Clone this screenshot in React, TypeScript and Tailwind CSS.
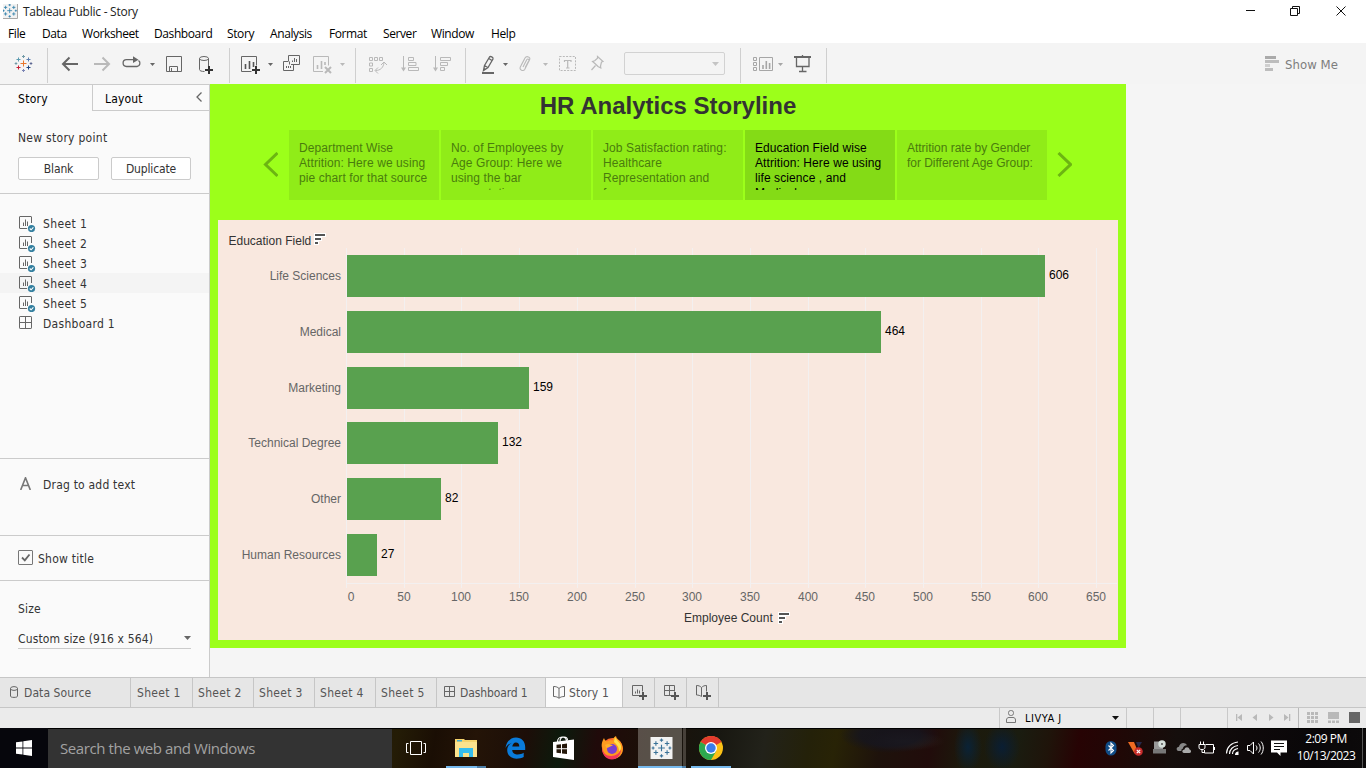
import type { ReactNode } from "react";

const TAHOMA = "font-['DejaVu_Sans_Condensed','DejaVu_Sans',sans-serif] font-stretch-condensed text-[12px] tracking-[0.17px]";
const SEGOE = "font-['Open_Sans','Noto_Sans',sans-serif]";
const ARIAL = "font-['Liberation_Sans',Arial,sans-serif]";

const DARK = "#666666";
const LIGHT = "#b9b9b9";

/* An icon whose drawing uses toolbar coordinates: x..x+w across, 51..79 down. */
function Tool({ x, w, className = "", children }: { x: number; w: number; className?: string; children: ReactNode }) {
  return (
    <svg width={w} height={28} viewBox={`${x} 51 ${w} 28`} className={`shrink-0 ${className}`} fill="none" stroke={DARK} strokeWidth={1}>
      {children}
    </svg>
  );
}

function Sep({ className = "" }: { className?: string }) {
  return <div className={`h-[35px] w-px shrink-0 bg-[#cfcfcf] ${className}`} />;
}

function Caret({ x, color = DARK, className = "" }: { x: number; color?: string; className?: string }) {
  return (
    <Tool x={x} w={6} className={className}>
      <path d={`M${x} 63h5l-2.5 3z`} fill={color} stroke="none" />
    </Tool>
  );
}

function Plus({ x, y, color = "#333" }: { x: number; y: number; color?: string }) {
  return <path d={`M${x - 4} ${y}h8M${x} ${y - 4}v8`} stroke={color} strokeWidth={2} />;
}

function Cross({ cx, cy, s, color, sw = 1 }: { cx: number; cy: number; s: number; color: string; sw?: number }) {
  return <path d={`M${cx - s} ${cy}h${2 * s}M${cx} ${cy - s}v${2 * s}`} stroke={color} strokeWidth={sw} fill="none" />;
}

function TableauMark({ cx, cy, mono }: { cx: number; cy: number; mono?: string }) {
  const c = (v: string) => mono ?? v;
  return (
    <g>
      <Cross cx={cx} cy={cy} s={3} color={c("#e8762c")} />
      <Cross cx={cx - 5} cy={cy - 4} s={2} color={c("#5b9bb0")} />
      <Cross cx={cx + 5} cy={cy - 4} s={2} color={c("#5b7fb0")} />
      <Cross cx={cx - 5} cy={cy + 4} s={2} color={c("#c72035")} />
      <Cross cx={cx + 5} cy={cy + 4} s={2} color={c("#1f447e")} />
      <Cross cx={cx} cy={cy - 7} s={1.5} color={c("#7199a6")} />
      <Cross cx={cx} cy={cy + 7} s={1.5} color={c("#7b85b5")} />
      <Cross cx={cx - 7.5} cy={cy} s={1.3} color={c("#7199a6")} />
      <Cross cx={cx + 7.5} cy={cy} s={1.3} color={c("#5c6692")} />
    </g>
  );
}

function TitleBar() {
  return (
    <div className="flex h-[23px] shrink-0 items-center bg-white">
      <svg width="16" height="16" viewBox="0 0 16 16" className="ml-[3px] mt-px shrink-0">
        <path d="M0 0h14v14H0z" fill="#f2f2f2" />
        <path d="M0 14.5h14.5V0" fill="none" stroke="#a8a8a8" />
        <g transform="translate(-.3 -.3) scale(.82)">
          <TableauMark cx={8.500} cy={8.500} mono="#2f7fab" />
        </g>
      </svg>
      <span className={`${SEGOE} ml-1 mt-px text-[12px] leading-[16px] tracking-[-0.25px] text-[#222]`}>Tableau Public - Story</span>
      <svg width="100" height="16" viewBox="1246 2 100 16" className="ml-auto mr-5 -mt-[2px]" fill="none" stroke="#111" strokeWidth="1">
        <path d="M1246 9.500h9M1290.500 7.500h7v7h-7zM1292.500 7.500v-2h7v7h-2M1336.500 5.500l9 9M1345.500 5.500l-9 9" />
      </svg>
    </div>
  );
}

const MENU: [string, string][] = [
  ["File", "w-[34px]"], ["Data", "w-[40px]"], ["Worksheet", "w-[72px]"], ["Dashboard", "w-[73px]"], ["Story", "w-[43px]"],
  ["Analysis", "w-[59px]"], ["Format", "w-[54px]"], ["Server", "w-[48px]"], ["Window", "w-[60px]"], ["Help", "w-[40px]"],
];

function MenuBar() {
  return (
    <div className={`${SEGOE} flex h-[20px] shrink-0 items-center bg-white pl-2 text-[12px] leading-[16px] tracking-[-0.4px] text-black`}>
      {MENU.map(([t, w]) => (
        <span key={t} className={`${w} shrink-0 pt-px`}>{t}</span>
      ))}
    </div>
  );
}

function Toolbar() {
  return (
    <div className="flex h-[41px] shrink-0 items-center bg-[#f4f4f4] pb-px pt-1">
      <Tool x={14} w={20} className="ml-[14px]"><TableauMark cx={23.500} cy={63.500} /></Tool>
      <Sep className="ml-[13px]" />
      <Tool x={61} w={18} className="ml-[13px]"><path d="M63 64h15M69.500 57.500L63 64l6.500 6.500" strokeWidth="2" /></Tool>
      <Tool x={93} w={18} className="ml-[14px]"><path d="M94 64h15M102.500 57.500L109 64l-6.500 6.500" stroke={LIGHT} strokeWidth="2" /></Tool>
      <Tool x={122} w={20} className="ml-[11px]">
        <path d="M134 59.700h-7.500a3.300 3.300 0 0 0 0 6.800h10.500a3.300 3.300 0 0 0 1.500-6" strokeWidth="1.300" />
        <path d="M133 56.300l5.500 3.400-5.500 3.400z" fill={DARK} stroke="none" />
      </Tool>
      <Caret x={150} className="ml-[8px]" />
      <Tool x={165} w={18} className="ml-[9px]"><path d="M166.500 56.500h15v15h-15zM169.500 71v-4.500h8V71M171.500 68v3" /></Tool>
      <Tool x={198} w={18} className="ml-[15px]">
        <ellipse cx="204" cy="58.500" rx="4.500" ry="2" />
        <path d="M199.500 58.500v11c0 1.300 2 2 5 2M208.500 58.500v8" />
        <Plus x={209} y={70} />
      </Tool>
      <Sep className="ml-[13px]" />
      <Tool x={240} w={22} className="ml-[10px]">
        <path d="M251.500 71.500h-10v-15h15v9" />
        <path d="M245.500 69v-5M249.500 69v-8M253.500 67v-5" stroke="#555" strokeWidth="1.600" />
        <Plus x={256} y={70} />
      </Tool>
      <Caret x={268} className="ml-[6px]" />
      <Tool x={282} w={20} className="ml-[8px]">
        <path d="M288.500 61v-5.500h11v9h-8.500M289.500 61.500v3M283.500 61.500h5M283.500 61.500v9h10v-5.500" />
        <path d="M292.500 62v-1.500M294.500 62v-4M296.500 62v-3M286.500 68v-2M288.500 68v-2M290.500 68v-2" />
      </Tool>
      <Tool x={313} w={20} className="ml-[11px]">
        <g stroke={LIGHT}>
          <path d="M323 71.500h-9.500v-15h15v9" />
          <path d="M317.500 69v-4M321.500 69v-8M325 65v-3" strokeWidth="1.600" />
          <path d="M325 67l6 6M331 67l-6 6" strokeWidth="2" />
        </g>
      </Tool>
      <Caret x={340} color={LIGHT} className="ml-[7px]" />
      <Sep className="ml-[9px]" />
      <Tool x={368} w={20} className="ml-[12px]">
        <path d="M369.500 57.500h3v3h-3zM374.500 57.500h3v3h-3zM379.500 57.500h3v3h-3zM369.500 63h3v3h-3zM369.500 68.500h3v3h-3zM375.500 70.500c5 0 8-3 8.500-8M378 67.500l-3 3 3 3M381 65l3-3 3 3" stroke={LIGHT} />
      </Tool>
      <Tool x={400} w={20} className="ml-[12px]">
        <path d="M403.500 56v14M408.500 57.500h5v3h-5zM408.500 62.500h7.500v3h-7.500zM408.500 67.500h10v3h-10z" stroke={LIGHT} />
        <path d="M401 67.500h5l-2.500 4z" fill={LIGHT} stroke="none" />
      </Tool>
      <Tool x={432} w={20} className="ml-[12px]">
        <path d="M435.500 56v14M440.500 57.500h10v3h-10zM440.500 62.500h7v3h-7zM440.500 67.500h4v3h-4z" stroke={LIGHT} />
        <path d="M433 67.500h5l-2.500 4z" fill={LIGHT} stroke="none" />
      </Tool>
      <Sep className="ml-[13px]" />
      <Tool x={481} w={16} className="ml-[15px]">
        <path d="M482 73h12" strokeWidth="2" />
        <path d="M483.500 70.500l1-5 5-8.500c1-1.300 4 .3 3.500 2l-5 8.500zM484.500 65.500l3.500 2.200M488.800 58.500l3.500 2.200M483.500 70.500l1.500-2" strokeWidth="1.300" />
      </Tool>
      <Caret x={503} className="ml-[6px]" />
      <Tool x={518} w={16} className="ml-[9px]">
        <path d="M521 65.500l4-7.500c1.500-2.500 6-1 4.600 1.800l-4.800 9.500c-1.500 2.500-5.800.5-4.500-2.200l4-7.600M523 67l3.700-7.200c1-1.500 2.800-.5 2.200.8l-3.700 7" stroke={LIGHT} strokeWidth="1.100" />
      </Tool>
      <Caret x={543} color={LIGHT} className="ml-[9px]" />
      <Tool x={558} w={20} className="ml-[9px]">
        <rect x="559.500" y="56.500" width="16" height="14" stroke={LIGHT} strokeDasharray="2 1.300" />
        <path d="M564.500 62v-1.500h6.500V62M567.700 60.500v7.500M566 68h3.500" stroke={LIGHT} strokeWidth="1.200" />
      </Tool>
      <Tool x={590} w={16} className="ml-[12px]">
        <path d="M597.500 56.500l5.500 5-1.500.5-1 4 .3 2-2.800-1.500-2.500-2.500-3-2.500 2.200-.8 2.800-2.500zM595.500 65.500l-4 4.500" stroke={LIGHT} strokeWidth="1.200" />
      </Tool>
      <div className="mb-[3px] ml-[18px] flex h-[23px] w-[101px] shrink-0 items-center justify-end rounded-[2px] border border-[#d2d2d2] pr-[5px]">
        <svg width="7" height="4" viewBox="0 0 7 4"><path d="M0 0h7L3.500 4z" fill="#c4c4c4" /></svg>
      </div>
      <Sep className="ml-[15px]" />
      <Tool x={752} w={22} className="ml-[11px]">
        <path d="M753.500 57.500h3v3h-3zM753.500 62.500h3v3h-3zM753.500 67.500h3v3h-3zM759.500 57.500h13v13h-13z" stroke="#a6a6a6" />
        <path d="M763 69v-4M766.300 69v-8M769.600 69v-6" stroke="#a6a6a6" strokeWidth="1.600" />
      </Tool>
      <Caret x={778} color="#a6a6a6" className="ml-[4px]" />
      <Tool x={793} w={20} className="ml-[9px]">
        <path d="M794 57h17" strokeWidth="2" />
        <path d="M802.500 55v2M796.500 57v9.500h12.500V57M802.500 66.500v5M799 71.500h7.500" strokeWidth="1.300" />
      </Tool>
      <Sep className="ml-[13px]" />
      <svg width="15" height="16" viewBox="0 0 15 16" className="mb-[2px] ml-auto shrink-0">
        <path d="M0 0h11v3H0z" fill="#aaa" />
        <path d="M0 4h14v3H0z" fill="#bdbdbd" />
        <path d="M0 8h5v3H0z" fill="#cfcfcf" />
        <path d="M0 12h8v3H0z" fill="#bdbdbd" />
      </svg>
      <span className="mb-[2px] mr-[28px] ml-[5px] pt-px font-['DejaVu_Sans_Condensed','DejaVu_Sans',sans-serif] font-stretch-condensed text-[13px] leading-[16px] tracking-[0.05px] text-[#7d7d7d]">Show Me</span>
    </div>
  );
}

function GridIcon({ color = DARK, className = "" }: { color?: string; className?: string }) {
  return (
    <svg width="13" height="13" viewBox="0 0 13 13" className={`shrink-0 ${className}`} fill="none" stroke={color}>
      <rect x=".5" y=".5" width="12" height="12" rx=".6" />
      <path d="M6.500 .5v12M.5 6.500h12" />
    </svg>
  );
}

function SheetIcon() {
  return (
    <svg width="17" height="16" viewBox="0 0 17 16" className="shrink-0" fill="none" stroke={DARK}>
      <path d="M8 12.500H1a.5.5 0 0 1-.5-.5V1a.5.5 0 0 1 .5-.5h11a.5.5 0 0 1 .5.5v6M4.500 10V6.500M6.500 10V3.500M8.500 10V5.500" />
      <circle cx="12.500" cy="12.500" r="3.600" fill="#337f9f" stroke="none" />
      <path d="M10.700 12.500l1.400 1.300 2.300-2.500" stroke="#fff" strokeWidth="1.100" />
    </svg>
  );
}

function Sidebar() {
  return (
    <aside className={`${TAHOMA} flex w-[210px] shrink-0 flex-col border-r border-t border-[#cbcbcb] bg-[#fafafa] leading-[16px] text-[#333]`}>
      <div className="flex h-[26px] shrink-0 text-black">
        <div className="w-[92px] pl-[18px] pt-[6px] tracking-[0.3px]">Story</div>
        <div className="flex flex-1 justify-between border-b border-l border-[#cbcbcb] pl-3 pr-[7px] pt-[6px]">
          <span>Layout</span>
          <svg width="6" height="10" viewBox="0 0 6 10" className="mt-px" fill="none" stroke="#666" strokeWidth="1.300"><path d="M5.500 .5L1 5l4.500 4.500" /></svg>
        </div>
      </div>
      <div className="h-[83px] shrink-0 border-b border-[#cbcbcb] pl-[18px] pt-[19px]">
        <div className="tracking-[0.28px]">New story point</div>
        <div className="mt-[11px] flex gap-3">
          <div className="h-[23px] w-[81px] rounded-[2px] border border-[#cbcbcb] bg-white pt-[3px] text-center tracking-[-0.15px]">Blank</div>
          <div className="h-[23px] w-[80px] rounded-[2px] border border-[#cbcbcb] bg-white pt-[3px] text-center tracking-[-0.15px]">Duplicate</div>
        </div>
      </div>
      <div className="h-[265px] shrink-0 border-b border-[#cbcbcb] pt-[19px]">
        {["Sheet 1", "Sheet 2", "Sheet 3", "Sheet 4", "Sheet 5"].map((t) => (
          <div key={t} className={`flex h-5 items-center gap-[7px] pl-[19px] pt-[2px] ${t === "Sheet 4" ? "bg-[#f4f4f4]" : ""}`}>
            <SheetIcon />
            <span className="tracking-[0.4px]">{t}</span>
          </div>
        ))}
        <div className="flex h-5 items-center gap-[11px] pl-[19px] pt-[2px]">
          <GridIcon className="-mt-[3px]" />
          <span className="tracking-[0.28px]">Dashboard 1</span>
        </div>
      </div>
      <div className="flex h-[77px] shrink-0 border-b border-[#cbcbcb] pl-5 pt-[18px]">
        <svg width="11" height="13" viewBox="0 0 11 13" fill="none" stroke="#777" strokeWidth="1.600"><path d="M.7 13L5.500 .8 10.300 13M2.500 8.500h6" /></svg>
        <span className="ml-3 tracking-[0.2px]">Drag to add text</span>
      </div>
      <div className="flex h-[45px] shrink-0 border-b border-[#cbcbcb] pl-[18px] pt-[14px]">
        <div className="h-[15px] w-[15px] rounded-[1px] border border-[#777]">
          <svg width="13" height="13" viewBox="0 0 13 13" fill="none" stroke="#666" strokeWidth="1.800"><path d="M3 6.500l2.800 2.800L10.500 3.500" /></svg>
        </div>
        <span className="ml-[5px] mt-px tracking-[0.25px]">Show title</span>
      </div>
      <div className="pl-[18px] pr-[18px] pt-5">
        <div>Size</div>
        <div className="mt-[12px] flex h-[20px] items-center justify-between border-b border-[#cbcbcb]">
          <span className="tracking-[0.13px]">Custom size (916 x 564)</span>
          <svg width="7" height="4" viewBox="0 0 7 4" className="-mt-[2px]"><path d="M0 0h7L3.500 4z" fill={DARK} /></svg>
        </div>
      </div>
    </aside>
  );
}

const POINTS: string[][] = [
  ["Department Wise", "Attrition: Here we using", "pie chart for that source"],
  ["No. of Employees by", "Age Group: Here we", "using the bar", "presentation"],
  ["Job Satisfaction rating:", "Healthcare", "Representation and", "for"],
  ["Education Field wise", "Attrition: Here we using", "life science , and", "Medical ,"],
  ["Attrition rate by Gender", "for Different Age Group:"],
];

const BARS: [string, number, number, number][] = [
  ["Life Sciences", 606, 255, 698],
  ["Medical", 464, 311, 534],
  ["Marketing", 159, 367, 182],
  ["Technical Degree", 132, 422, 151],
  ["Other", 82, 478, 94],
  ["Human Resources", 27, 534, 30],
];
const TICKS = [346.5, 404.5, 461.5, 519.5, 577.5, 635.5, 692.5, 750.5, 808.5, 865.5, 923.5, 981.5, 1038.5, 1096.5];

function SortMark({ x, y }: { x: number; y: number }) {
  return (
    <g>
      <path d={`M${x - 1} ${y - 1}h12v4h-4v4h-3v4h-5z`} fill="#fff" />
      <path d={`M${x} ${y}h10v2h-10zM${x} ${y + 4}h6v2h-6zM${x} ${y + 8}h3v2h-3z`} fill="#555" />
    </g>
  );
}

function Chart() {
  return (
    <svg width="900" height="420" viewBox="218 220 900 420" className={`${ARIAL} block bg-[#f9e8df] text-[12px]`}>
      {TICKS.map((x) => <path key={x} d={`M${x} 248V588`} stroke="#f3f0f0" />)}
      <path d="M346 583.500h771" stroke="#f3f0f0" />
      {BARS.map(([name, n, y, w]) => (
        <g key={name}>
          <rect x={347} y={y} width={w} height={42} fill="#59a14f" />
          <text x={341} y={y + 25} textAnchor="end" fill="#666">{name}</text>
          <text x={347 + w + 4} y={y + 24} fill="#000">{n}</text>
        </g>
      ))}
      {TICKS.map((x, i) => (
        <text key={x} x={i === 0 ? 351 : x - 0.5} y={601} textAnchor="middle" fill="#666">{i * 50}</text>
      ))}
      <text x={228.500} y={245} fill="#333">Education Field</text>
      <SortMark x={315} y={234} />
      <text x={684} y={622} fill="#333">Employee Count</text>
      <SortMark x={779} y={613} />
    </svg>
  );
}

function Story() {
  return (
    <section className={`${ARIAL} flex h-[564px] w-[916px] shrink-0 flex-col bg-[#9cff1a] px-2`}>
      <h1 className="h-[46px] pt-2 text-center text-[24px] font-bold leading-[28px] text-[#333]">HR Analytics Storyline</h1>
      <div className="flex h-[90px]">
        <svg width="15" height="26" viewBox="0 0 15 26" className="ml-[45px] mt-[22px]" fill="none" stroke="#6cb512" strokeWidth="3"><path d="M14.500 1L2.500 12.500l12 11.500" /></svg>
        <div className="ml-[11px] flex gap-[2px]">
          {POINTS.map((lines, i) => (
            <div key={i} className={`h-[70px] w-[150px] px-[10px] pt-[11px] ${i === 3 ? "bg-[#84db16] text-black" : "bg-[#90ec18] text-[#4a7c0d]"}`}>
              <div className={`h-[49px] overflow-hidden whitespace-nowrap text-[12px] leading-[15px] ${i === 4 ? "tracking-[-0.03px]" : "tracking-[0.09px]"}`}>
                {lines.map((l) => <div key={l}>{l}</div>)}
              </div>
            </div>
          ))}
        </div>
        <svg width="15" height="26" viewBox="0 0 15 26" className="ml-[10px] mt-[22px]" fill="none" stroke="#6cb512" strokeWidth="3"><path d="M1.500 1l12 11.500L1.500 24" /></svg>
      </div>
      <Chart />
    </section>
  );
}

function Tab({ w, children, active }: { w: string; children: ReactNode; active?: boolean }) {
  return (
    <div className={`${w} flex shrink-0 items-center border-r border-[#c6c6c6] pl-[6px] ${active ? "bg-[#fafafa]" : ""}`}>{children}</div>
  );
}

function BookIcon() {
  return (
    <svg width="12" height="13" viewBox="0 0 12 13" className="shrink-0" fill="none" stroke={DARK}>
      <path d="M6 2.500C4.500 1 3 .5 .5 .5v10c2.500 0 4 .5 5.500 1.800 1.500-1.300 3-1.800 5.500-1.800V.5C9 .5 7.500 1 6 2.500zM6 2.500v9.500" />
    </svg>
  );
}

function SheetTabs() {
  return (
    <div className={`${TAHOMA} flex h-[31px] shrink-0 border-b border-t border-[#c6c6c6] bg-[#e6e6e6] leading-[16px] text-[#555]`}>
      <div className="flex w-[131px] shrink-0 items-center border-r border-[#c6c6c6] pl-[10px]">
        <svg width="8" height="12" viewBox="0 0 8 12" className="-mt-[2px] shrink-0" fill="none" stroke={DARK}><ellipse cx="4" cy="2.500" rx="3.500" ry="1.900" /><path d="M.5 2.500V10c0 .8 1 1.400 3.500 1.400S7.500 10.800 7.500 10V2.500" /></svg>
        <span className="ml-[6px] tracking-[0.08px]">Data Source</span>
      </div>
      <Tab w="w-[62px]"><span className="tracking-[0.3px]">Sheet 1</span></Tab>
      <Tab w="w-[61px]"><span className="-ml-px tracking-[0.3px]">Sheet 2</span></Tab>
      <Tab w="w-[61px]"><span className="-ml-px tracking-[0.3px]">Sheet 3</span></Tab>
      <Tab w="w-[61px]"><span className="-ml-px tracking-[0.3px]">Sheet 4</span></Tab>
      <Tab w="w-[61px]"><span className="-ml-px tracking-[0.3px]">Sheet 5</span></Tab>
      <Tab w="w-[109px]"><svg width="11" height="11" viewBox="0 0 11 11" className="-mt-[2px] ml-px" fill="none" stroke={DARK}><path d="M.5 .5h10v10H.5zM5.500 .5v10M.5 5.500h10" /></svg><span className="ml-[5px] tracking-[-0.12px]">Dashboard 1</span></Tab>
      <Tab w="w-[77px]" active><span className="ml-px flex"><BookIcon /></span><span className="ml-[4px]">Story 1</span></Tab>
      <Tab w="w-[32px]">
        <svg width="17" height="16" viewBox="0 0 17 16" className="ml-[2px] mt-px" fill="none" stroke={DARK}><path d="M8 10.500H1.500v-10h10v6M4.500 8.500v-2M6.500 8.500v-4M8.500 8.500v-3" /><Plus x={12} y={11} color="#555" /></svg>
      </Tab>
      <Tab w="w-[32px]">
        <svg width="17" height="16" viewBox="0 0 17 16" className="ml-[2px] mt-px" fill="none" stroke={DARK}><path d="M8 10.500H1.500v-10h10v6M6.500 .5v10M1.500 5.500h10" /><Plus x={12} y={11} color="#555" /></svg>
      </Tab>
      <Tab w="w-[32px]">
        <svg width="17" height="16" viewBox="0 0 17 16" className="ml-[2px] mt-px" fill="none" stroke={DARK}><path d="M6.500 2.500C5 1 3.500 .5 1.500 .5v9.500c2 0 3.500.5 5 1.500V2.500C8 1 9.500 .5 11.500 .5v6" /><Plus x={12} y={11} color="#555" /></svg>
      </Tab>
    </div>
  );
}

function StatusBar() {
  return (
    <div className="flex h-[20px] shrink-0 justify-end bg-[#ebebeb]">
      <div className="flex w-[128px] items-center border-l border-r border-[#c9c9c9] pl-[6px]">
        <svg width="10" height="13" viewBox="0 0 10 13" className="-mt-[3px]" fill="none" stroke="#777"><rect x="2.500" y=".5" width="5" height="5" rx="2.200" /><path d="M.5 12.500v-2.500c0-1.600 1-2.500 2.500-2.500h4c1.500 0 2.500.9 2.500 2.500v2.500z" /></svg>
        <span className="ml-[9px] pt-[2px] font-['DejaVu_Sans_Condensed','DejaVu_Sans',sans-serif] font-stretch-condensed text-[11px] leading-[14px] tracking-[0.5px] text-black">LIVYA J</span>
        <svg width="7" height="4" viewBox="0 0 7 4" className="ml-auto mr-[7px]"><path d="M0 0h7L3.500 4z" fill="#111" /></svg>
      </div>
      <div className="w-[27px] border-r border-[#c9c9c9]" />
      <div className="w-[27px] border-r border-[#c9c9c9]" />
      <div className="w-[47px] border-r border-[#c9c9c9]" />
      <svg width="71" height="20" viewBox="1228 708 71 20" className="shrink-0" fill="#b9b9b9">
        <path d="M1236 714h1.300v7h-1.300zM1242 714v7l-4.500-3.500zM1257 714v7l-4.500-3.500zM1269 714v7l4.500-3.500zM1284 714v7l4.500-3.500zM1289 714h1.300v7h-1.300zM1298 708h1v20h-1z" />
      </svg>
      <svg width="67" height="20" viewBox="1299 708 67 20" className="shrink-0" fill="#b9b9b9">
        <path d="M1307 712h3v3h-3zM1311 712h3v3h-3zM1315 712h3v3h-3zM1307 716h3v3h-3zM1311 716h3v3h-3zM1315 716h3v3h-3zM1307 720h3v3h-3zM1311 720h3v3h-3zM1315 720h3v3h-3zM1328 712h11v7h-11zM1328 720.500h3v2.500h-3zM1332 720.500h3v2.500h-3zM1336 720.500h3v2.500h-3z" />
        <path d="M1349 712h11v11h-11z" fill={DARK} />
      </svg>
    </div>
  );
}

function AppIcons() {
  return (
    <svg width="348" height="40" viewBox="392 728 348 40" className="shrink-0">
      <path d="M410.500 741.500h11v13h-11zM408.500 743.500h-2v9h2M423.500 743.500h2v9h-2" fill="none" stroke="#fff" />
      <path d="M638 728h44v40h-44z" fill="#8b857e" opacity=".55" />
      <path d="M683 728h3v40h-3z" fill="#8b857e" opacity=".4" />
      <path d="M446 766h40v2h-40zM638 766h44v2h-44zM691 766h40v2h-40z" fill="#76b9ed" />
      <path d="M477 766h9v2h-9zM682 766h4v2h-4z" fill="#4d7fa8" />
      {/* file explorer */}
      <path d="M455 740v-1h9l1 1h12v17h-22z" fill="#f5d36c" />
      <path d="M455 742h22v15h-22z" fill="#fbe28d" />
      <path d="M457 740h5v1.500h-5z" fill="#38b0dd" />
      <path d="M459 748h14v9h-4v-4h-6v4h-4z" fill="#35bdee" />
      {/* edge */}
      <path d="M505.500 748c.7-6 5-10.500 10.500-10.500 5.500 0 9.200 4 9.200 9.500v3h-13c.3 3.500 3 4.500 5.500 4.500 2.300 0 4.500-.7 6-1.700v4.200c-2 1.200-4.500 1.700-7.300 1.700-5.500 0-9.200-3.700-9.200-8.500 0-3.500 1.800-6 4.800-7.500-2.800 1-4.800 2.600-6.500 5.300zM512.300 746.500h7c0-2.500-1.200-4-3.400-4-2 0-3.300 1.700-3.600 4z" fill="#0a7bda" fillRule="evenodd" />
      {/* store */}
      <path d="M553 742l21-2.500v20.500l-21-3z" fill="#fff" />
      <path d="M557.500 742c0-3 2-5 4.500-5s4.500 2 4.500 4.500M560 741.500c0-3 2-4.500 4-4.500 2.500 0 3.500 1.500 3.500 3.500" fill="none" stroke="#fff" strokeWidth="1.200" />
      <path d="M556.500 744.800l4.500-.5v4h-4.500zM562 744.200l5-.6v4.700h-5zM556.500 749.300h4.500v4l-4.500-.5zM562 749.300h5v4.800l-5-.6z" fill="#241709" />
      {/* firefox */}
      <circle cx="612.500" cy="748.500" r="10.500" fill="#ff6b2c" />
      <path d="M602 748c-1-5 1-8 2-10 .5 2 1.500 3 3 3.500 2-1.500 4-1.500 5.500-1 1-3 2.500-4 3.500-4.500.5 3 3.500 4 5 7 1.500 2.500 2 5 1.800 7-.8 5.500-5 9-10.300 9-5.500 0-9.800-4-10.500-11z" fill="#ff9a1f" />
      <path d="M602 746c.5 7 4 10 9 10 5 0 9-3 10-7 0 6-4 10.500-9 10.500-6 0-10.500-5-10-13.500z" fill="#f2355b" />
      <path d="M615 737c1 3 5 5 6 9 .5 3-1 5-2 5 0-5-3-7-5-9z" fill="#ffe14a" />
      <circle cx="612" cy="749" r="5" fill="#7a3fd1" />
      <path d="M605 745c3-2 6-1 8 .5-2 .5-4 2-6.500 2.500z" fill="#ffb12b" />
      {/* tableau */}
      <path d="M650.500 737h22v22h-22z" fill="#f2f2f2" />
      <g transform="translate(661.500 748) scale(1.120) translate(-661.500 -748)"><TableauMark cx={661.500} cy={748} mono="#3a7298" /></g>
      {/* chrome */}
      <circle cx="711" cy="748" r="12" fill="#fbc116" />
      <path d="M711 748L700.600 742a12 12 0 0 1 20.800 0z" fill="#e33b2e" />
      <path d="M711 736a12 12 0 0 1 10.400 6H711z" fill="#e33b2e" />
      <path d="M700.600 742a12 12 0 0 0 10.400 18l5.200-9L711 748z" fill="#2da94f" />
      <circle cx="711" cy="748" r="6" fill="#fff" />
      <circle cx="711" cy="748" r="4.700" fill="#3b7de9" />
    </svg>
  );
}

function Tray() {
  return (
    <svg width="188" height="40" viewBox="1100 728 188 40" className="ml-auto shrink-0" fill="none" stroke="#fff">
      <rect x="1105.500" y="741" width="11" height="14.500" rx="5.500" fill="#104c86" stroke="none" />
      <path d="M1108.500 745.500l5 5-2.500 2.500v-10l2.500 2.500-5 5" strokeWidth="1.100" />
      <path d="M1128 742h6l2.500 6 2 5-4 .5z" fill="#ee6a22" stroke="none" />
      <path d="M1136 742h6l-3.500 6z" fill="#252a4c" stroke="none" />
      <circle cx="1138.500" cy="751.500" r="4.300" fill="#c72b2b" stroke="none" />
      <path d="M1136.800 749.800l3.400 3.400M1140.200 749.800l-3.400 3.400" strokeWidth="1.200" />
      <path d="M1154 741.500h9v7.500h-9z" fill="#999" stroke="none" />
      <path d="M1153 749h13v4.500h-13z" fill="#777" stroke="none" />
      <circle cx="1162" cy="744" r="3.700" fill="#d5ded9" stroke="none" />
      <circle cx="1162" cy="744" r="1" fill="#555" stroke="none" />
      <path d="M1178.500 751c-2.500-.5-2.500-4 .5-4.300.5-4 6-5.200 8-1.500-2.500 0-4 1.500-4 3.300-1.500.3-1.800 1.500-1.500 2.500z" fill="#888" stroke="none" />
      <path d="M1184 753c-2.500-.5-2-3.500.5-3.500.5-3 4.500-3 5 0 2 .5 2 3.500 0 3.500z" fill="#aaa" stroke="none" />
      <path d="M1205.500 744.500h8v8.500h-9v-3M1214.500 747v3M1200.500 741.500v3M1203.500 741.500v3M1199 744.500h6v2.500c0 2-1 2.500-3 2.500s-3-.5-3-2.500zM1202 749.500v3h2.500" />
      <path d="M1226.500 753.500c0-6 5-11 11.500-11.500M1229.500 754c0-4.500 3.500-8 8.500-8.500M1232.500 754c0-3 2.500-5 5.500-5.500" strokeWidth="1.100" />
      <path d="M1235 755a3.500 3.500 0 0 1 3.500-3.500v3.500z" fill="#fff" stroke="none" />
      <path d="M1247.500 745.500h2.500l3.500-3.500v12l-3.500-3.500h-2.500zM1256 745.500c1.300 1.500 1.300 3.500 0 5M1258.500 743.500c2.300 2.500 2.300 6.500 0 9M1261 741.500c3 3.500 3 9.500 0 13" />
      <path d="M1271 740.500h16v12h-6.500v3.500l-3.500-3.500h-6z" fill="#fff" stroke="none" />
      <path d="M1274 743.500h10M1274 746.500h10M1274 749.500h6" stroke="#111" />
    </svg>
  );
}

function Taskbar() {
  return (
    <div className={`${SEGOE} flex h-[40px] shrink-0 border-t border-black bg-[radial-gradient(ellipse_50px_18px_at_890px_6px,#15151fcc_0,#15151fcc_60%,transparent_100%),radial-gradient(ellipse_40px_10px_at_905px_12px,#2c2420_0,transparent_100%),radial-gradient(ellipse_14px_26px_at_968px_18px,#0a2236_0,transparent_100%),radial-gradient(ellipse_18px_24px_at_1002px_18px,#0a1e33_0,transparent_100%),linear-gradient(100deg,#06060c_0,#06060c_48px,#241c06_392px,#1a0e04_430px,#241407_470px,#1c0e08_520px,#0c1a0c_555px,#200a0a_590px,#1c1008_640px,#16150f_700px,#22221a_755px,#242109_800px,#282306_825px,#1e120b_870px,#210c0b_920px,#1c1a0c_955px,#1a1c10_1005px,#1f140a_1035px,#270304_1065px,#1f0806_1110px,#150e0c_1160px,#0e090a_1230px,#090709_1300px,#0d0b0b_1366px)]`}>
      <div className="-mt-px flex h-[40px] min-w-0 flex-1">
        <div className="flex w-[48px] shrink-0 items-center bg-[#06060c] pl-4">
          <svg width="16" height="16" viewBox="0 0 16 16" fill="#fff"><path d="M0 2.300l6.500-.9v6.200H0zM7.300 1.200L16 0v7.600H7.300zM0 8.400h6.500v6.200L0 13.700zM7.300 8.400H16V16l-8.700-1.200z" /></svg>
        </div>
        <div className="mt-px flex w-[344px] shrink-0 items-center bg-[#333] pb-[2px] pl-3 text-[15px] leading-[20px] tracking-[-0.42px] text-[#a2a2a2]">Search the web and Windows</div>
        <AppIcons />
        <Tray />
        <div className="flex w-[73px] shrink-0 flex-col items-center pl-[3px] pt-[2px] text-[12px] leading-[17px] tracking-[-0.5px] text-white">
          <span>2:09 PM</span>
          <span>10/13/2023</span>
        </div>
        <div className="ml-px w-[4px] border-l border-[#555]" />
      </div>
    </div>
  );
}

export default function App() {
  return (
    <div className="flex h-[768px] w-[1366px] flex-col overflow-hidden bg-white">
      <TitleBar />
      <MenuBar />
      <Toolbar />
      <main className="flex min-h-0 flex-1 bg-[#f5f5f5]">
        <Sidebar />
        <Story />
      </main>
      <SheetTabs />
      <StatusBar />
      <Taskbar />
    </div>
  );
}
